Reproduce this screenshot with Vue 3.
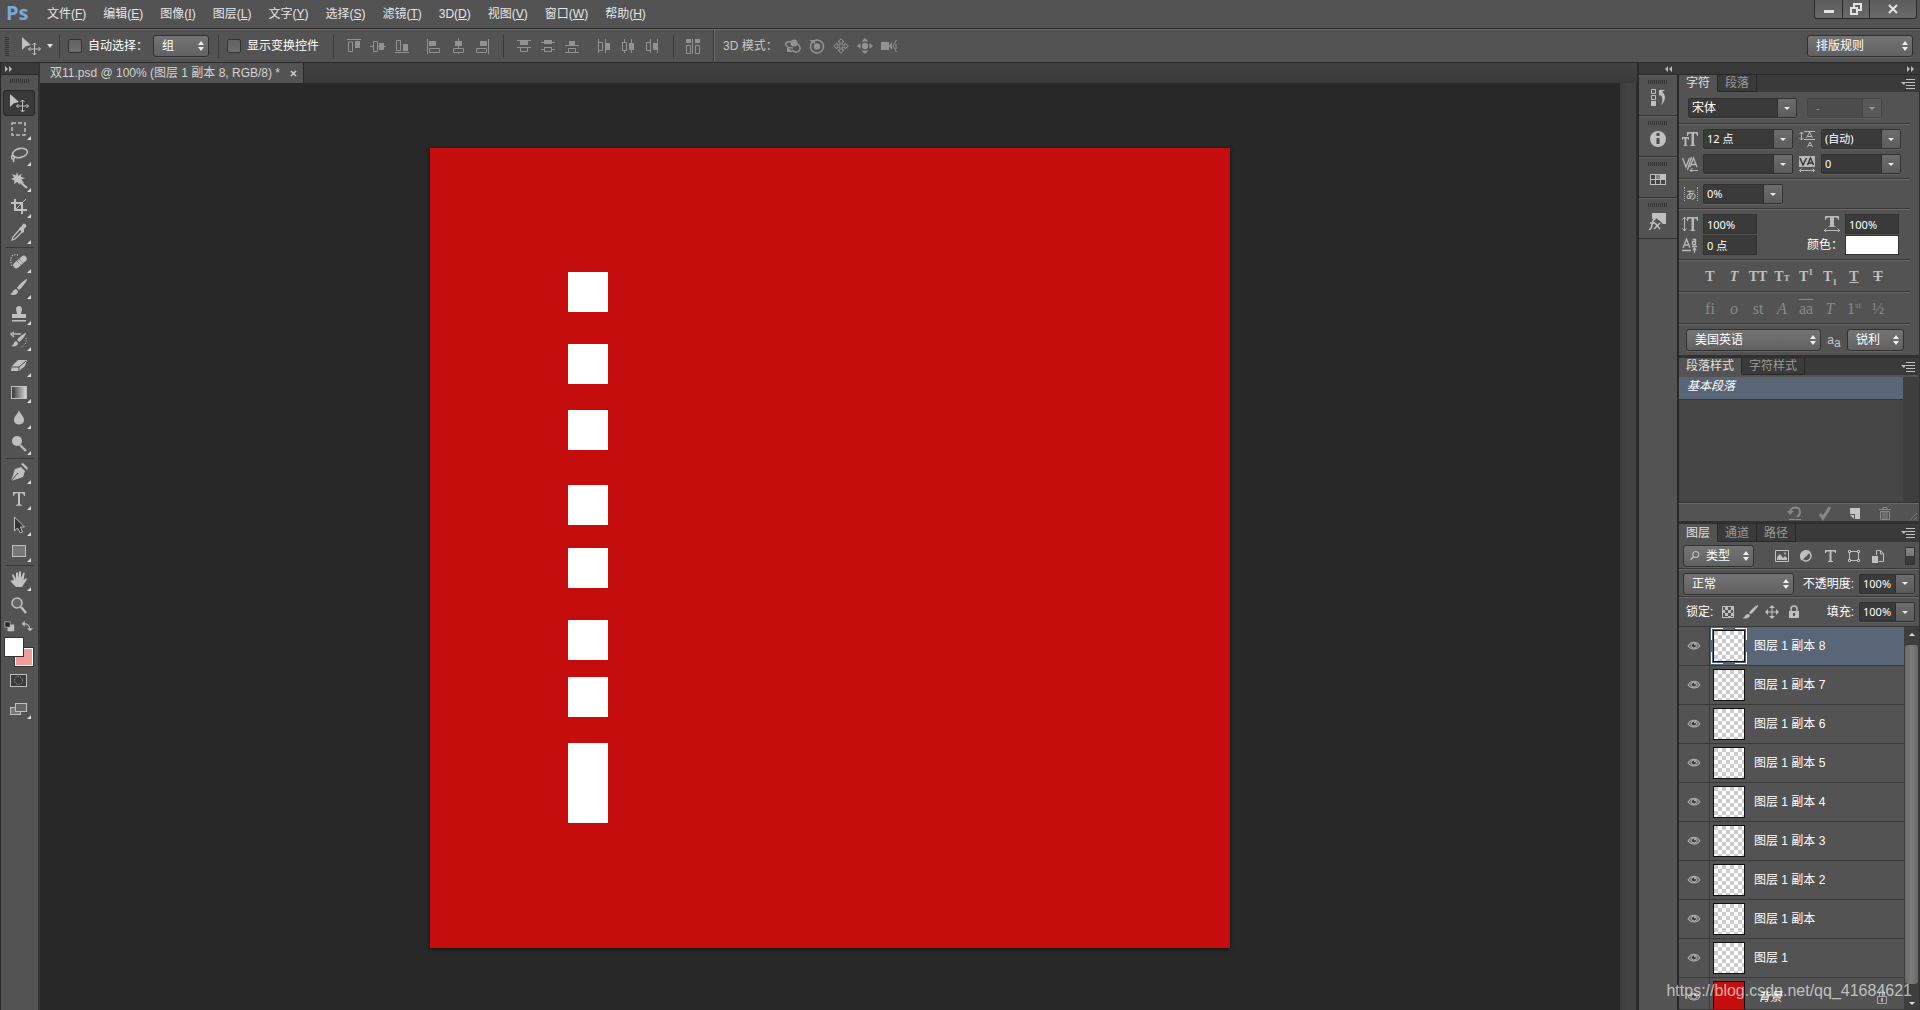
<script setup>
import { ref, reactive } from 'vue'

const menus = [
  ['文件', 'F'], ['编辑', 'E'], ['图像', 'I'], ['图层', 'L'], ['文字', 'Y'], ['选择', 'S'],
  ['滤镜', 'T'], ['3D', 'D'], ['视图', 'V'], ['窗口', 'W'], ['帮助', 'H'],
]

const icons = {
  // options bar, 16 x 16
  alignTop: '<path d="M1 1.500h14"/><path d="M2.500 4v9.500h4V4z"/><rect class="f" x="9" y="3" width="5" height="7"/>',
  alignMiddle: '<path d="M0 8.500h3M7 8.500h2M14 8.500h2"/><path d="M3.500 3.500v10h4v-10z"/><rect class="f" x="9" y="5" width="5" height="7"/>',
  alignBottom: '<path d="M1 14.500h14"/><path d="M2.500 2.500v10h4v-10z"/><rect class="f" x="9" y="6" width="5" height="7"/>',
  alignLeft: '<path d="M1.500 1v15"/><rect class="f" x="3" y="3" width="7" height="5"/><path d="M3.500 10.500h10v4h-10z"/>',
  alignCenter: '<path d="M8.500 0v3M8.500 8v2M8.500 14v2"/><rect class="f" x="5" y="3" width="7" height="5"/><path d="M3.500 10.500h10v4h-10z"/>',
  alignRight: '<path d="M14.500 1v15"/><rect class="f" x="6" y="3" width="7" height="5"/><path d="M2.500 10.500h10v4h-10z"/>',
  distTop: '<path d="M1 2.500h14M1 9.500h14"/><rect class="f" x="4" y="3" width="8" height="4"/><path d="M4.500 9.500h7v4h-7z"/>',
  distMiddle: '<path d="M1 4.500h14M1 11.500h14"/><rect class="f" x="4" y="2" width="8" height="4"/><rect x="4.500" y="9.500" width="7" height="4" fill="#535353"/>',
  distBottom: '<path d="M1 7.500h14M1 14.500h14"/><rect class="f" x="5" y="3" width="6" height="4"/><path d="M4.500 10.500h7v4h-7z"/>',
  distLeft: '<path d="M2.500 1v14M9.500 1v14"/><path d="M2.500 4.500h4v8h-4z"/><rect class="f" x="10" y="5" width="4" height="7"/>',
  distCenter: '<path d="M4.500 1v14M11.500 1v14"/><rect x="2.500" y="4.500" width="4" height="8" fill="#535353"/><rect class="f" x="9" y="5" width="5" height="7"/>',
  distRight: '<path d="M6.500 1v14M13.500 1v14"/><path d="M2.500 4.500h4v8h-4z"/><rect class="f" x="9" y="5" width="4" height="7"/>',
  autoAlign: '<path d="M7.500 1v15M1.500 7.500h4v8h-4zM10.500 7.500h4v8h-4z"/><rect class="f" x="1" y="1" width="5" height="4"/><rect class="f" x="10" y="1" width="5" height="4"/>',
  orbit: '<path stroke-width="1.500" d="M6 4C2 3 0 5 1 7s4 3 7 3M3 11l3 2"/><circle class="f" cx="9" cy="5" r="3.500"/><path class="f" d="M2 9v5h6z"/><path stroke-width="1.500" d="M12 5c3 3 4 6 2 8s-5 1-7-1"/>',
  roll: '<circle cx="8" cy="8.500" r="6.500" stroke-width="1.500"/><circle class="f" cx="8" cy="8.500" r="3.200"/><path class="f" d="M0 2h6v4z"/>',
  pan: '<path d="M8 .7l3 3.300H9v3h3V5l3.300 3-3.300 3V9H9v3h2l-3 3.300L5 12h2V9H4v2L.7 8 4 5v2h3V4H5z"/>',
  slide: '<circle class="f" cx="8" cy="8" r="3.200"/><path class="f" d="M8 0l3.500 3.500h-7zM8 16l3.500-3.500h-7zM0 8l3.500-3v6zM16 8l-3.500-3v6z"/>',
  camera: '<path class="f" d="M0 4h8v8H0zM8 8l3-4v8z"/><path d="M15.500 2L12 8l3.500 6M15 6v5"/>',
  // tools, 20 x 20
  move: '<path class="f" d="M1 1v13l3.500-3.500L10 9z"/><path d="M13.500 7v12M7.500 13h12M11.500 9l2-2 2 2M11.500 17l2 2 2-2M9.500 11l-2 2 2 2M17.500 11l2 2-2 2"/>',
  marquee: '<rect x="3" y="4" width="13" height="12" stroke-width="1.500" stroke-dasharray="4 2"/>',
  lasso: '<ellipse cx="11" cy="8" rx="7.500" ry="4.500" transform="rotate(-12 11 8)" stroke-width="1.600"/><path stroke-width="1.500" d="M4 10c-2 1-2 4 0 4s2-3 0-3M4 14c1 1 1 2 0 3"/>',
  wand: '<path class="f" d="M8 1l1.500 4 3-2.500L12 6l4 1-3.500 1.500L15 12l-4-1-.5 3-2-3-3.500 2 .5-3.500L2 8l3-1.500L3 3l4 1.500z"/><path stroke-width="2.200" d="M10 10l8 7"/>',
  crop: '<path stroke-width="2" d="M6 2v11h12M2 6h11v11"/><path d="M7 12l10-10"/>',
  eyedropper: '<path class="f" d="M10 5l2-1 2-3c2-1 4 1 3 3l-2 2v3l-2 1z"/><path stroke-width="1.300" d="M11 6l-7 8-1 3 3-1 7-7"/>',
  heal: '<path stroke-dasharray="1 1.500" stroke-width="1.500" d="M9 3C3 1 0 7 3 14"/><rect class="f" x="3" y="7" width="16" height="6" rx="3" transform="rotate(-42 11 10)"/><path stroke="#555" stroke-dasharray="1 1" d="M8 9l4 4M10 7l4 4"/>',
  brush: '<path class="f" d="M18 1c1 1-6 10-8 11l-2-2c1-2 8-9 10-9zM7 11l2 2c0 4-5 5-8 3 3 0 2-4 6-5z"/>',
  stamp: '<path class="f" d="M7 5c0-4 6-4 6 0 0 2-1 3-1 5h5v4H3v-4h5c0-2-1-3-1-5zM3 16h14v1.500H3z"/>',
  history: '<path class="f" d="M17 3c0 2-5 8-7 9l-2-2c1-2 7-7 9-7zM7 11l2 2c0 3-4 4-7 3 3 0 2-4 5-5z"/><path stroke-width="1.500" d="M4 4h8M5 2L2 4l3 3"/><path stroke-dasharray="1 1.500" d="M17 8c1 4-1 8-5 9"/>',
  eraser: '<path class="f" d="M9 4h9l-2 6-6 5H2l1-5z"/><path stroke="#4a4a4a" d="M3 11h7l7-6M10 11v4"/>',
  gradient: '<defs><linearGradient id="toolGradient"><stop stop-color="#333"/><stop offset="1" stop-color="#ddd"/></linearGradient></defs><rect x="2.500" y="4.500" width="15" height="12" fill="url(#toolGradient)"/>',
  blur: '<path class="f" d="M10 2c1 4 5 6 5 10 0 6-10 6-10 0 0-4 4-6 5-10z"/>',
  dodge: '<circle class="f" cx="8" cy="7" r="5"/><path stroke-width="2.200" d="M11 11l6 6"/>',
  pen: '<path class="f" d="M12 4l4 4-2 6-12 4 4-12z"/><path class="f" d="M12 1l6 6 1-2-5-5z"/><path stroke="#4a4a4a" d="M2 18l6-7"/><circle cx="8.500" cy="10.500" r="1" fill="#4a4a4a"/>',
  type: '<path class="f" d="M4 3h12v4h-1c-.3-2-1-2.700-2.500-2.700H11V14c0 1.500.5 1.700 2 1.800v1H7v-1c1.500-.1 2-.3 2-1.800V4.300H7.500C6 4.300 5.300 5 5 7H4z"/>',
  pathSelect: '<path d="M5.500 2v14l3-3 3 5 2-1-2-5h4z" fill="#333"/>',
  shape: '<rect x="3.500" y="4.500" width="13" height="11" fill="#777"/>',
  hand: '<path class="f" d="M5 10L3 5c0-1 1.500-1 2 0l2 4V3c0-1 1.800-1 2 0l.5 5L10 2c0-1 2-1 2 0v6l2-5c.5-1 2-.5 1.700.5L14.500 10l2-1.500c1-.5 2 .5 1 1.500L13 17H7l-5-5c-1-1 .5-2 1.500-1.500z"/>',
  zoom: '<circle cx="8" cy="7" r="5" stroke-width="1.500" fill="#666"/><path stroke-width="2.500" d="M12 11l5 6"/>',
  quickMask: '<rect x="1.500" y="4.500" width="16" height="12" fill="#3a3a3a"/><circle cx="9.500" cy="10.500" r="4" stroke-dasharray="1 1.500"/>',
  screen: '<rect x="1.500" y="9.500" width="10" height="7" fill="#777"/><rect x="6.500" y="5.500" width="11" height="8" fill="#666"/>',
  // dock, 20 x 20
  dockHistory: '<path d="M3.500 1.500h4v4h-4zM3.500 7.500h4v4h-4z"/><rect class="f" x="3" y="13" width="5" height="5"/><path class="f" d="M11 2h6L14 4c5 3 3 10-1 13 2-4 2-9-1-10l-1 1z"/>',
  info: '<circle class="f" cx="10" cy="10" r="8"/><path stroke="#4a4a4a" stroke-width="3" d="M10 9v6M10 4v3"/>',
  swatches: '<rect x="2.500" y="4.500" width="15" height="10" fill="#444"/><rect class="f" x="13" y="5" width="4" height="5"/><rect class="f" x="8" y="5" width="4" height="4" opacity=".5"/><path d="M7.500 5v9M12.500 5v9M3 9.500h14"/>',
  styles: '<path class="f" d="M4 2h14v11h-3l-3-3-4-3-4 1z"/><path stroke-width="1.500" d="M8 8c-3-1-3 3-4 6s-1 5-3 4M2 12h5M7 12l5 6M12 12l-6 6"/>',
  // character panel and layers, 16 x 16
  size: '<path class="f" d="M5 1h11v4h-1c0-2-1-2.500-3-2.500V13c0 1.500 1 1.500 1.500 1.500V15h-6v-.5C9 14.500 9.500 14 9.500 13V2.500C7 2.500 6 3 6 5H5zM0 6h7v3H6.500C6.300 8 6 7.500 4.500 7.500V13c0 1 .5 1.500 1 1.500v.5h-4v-.5c.5 0 1-.5 1-1.500V7.500C1 7.500.7 8 .5 9H0z"/>',
  leading: '<path d="M5 .5h11M5 8.500h11M2.500 1v8M.5 3l2-2 2 2M.5 7l2 2 2-2M7.500 7L10.500 1l3 6M9 5.500h3.500M8.500 16l2.500-5 2.500 5M9.500 14.500h3"/>',
  kerning: '<path stroke-width="1.300" d="M.5 2L4 11 7.500 2M9.500 1L5.500 14M8 11l3.500-9L15 11M9 8.500h5"/><path d="M8 14.500h8M10.500 12L8 14.500l2.500 2"/>',
  tracking: '<rect class="f" width="16" height="11"/><path stroke="#333" stroke-width="1.400" d="M1 2l3 7 3.500-7M8.500 9l3-7 3 7M9.500 7h4"/><path d="M0 14.500h16M2.500 12.500l-2 2 2 2M13.500 12.500l2 2-2 2"/>',
  vscale: '<path d="M2.500 1v14M.5 3.500l2-2.500 2 2.500M.5 12.500l2 2.500 2-2.500"/><path class="f" d="M5 1h11v4h-1c0-2-1-2.500-3-2.500V13c0 1.500 1 1.500 1.500 1.500V15h-6v-.5C9 14.500 9.500 14 9.500 13V2.500C7 2.500 6 3 6 5H5z"/>',
  hscale: '<path class="f" d="M1 0h14v4h-1c0-2-1-2.500-4-2.500V9c0 1 .5 1.500 2 1.500V11H4v-.5C5.500 10.500 6 10 6 9V1.500C3 1.500 2 2 2 4H1z"/><path d="M0 14.500h16M2.500 12.500l-2 2 2 2M13.500 12.500l2 2-2 2"/>',
  baseline: '<path stroke-width="1.300" d="M1 11L4.500 2 8 11M2.500 8h4M0 13.500h9M10.500 2.500h3v5h-3v-3h3M10 9.500h5M12.500 16v-5M11 13l1.500-2 1.500 2"/>',
  history2: '<path stroke-width="2" d="M3 7c1-6 10-6 10 0 0 2-1 4-3 5"/><path class="f" d="M0 6h7l-4 4zM2 14h12v1H2z"/>',
  check: '<path stroke-width="3" d="M3 9l3 4 7-11"/>',
  newItem: '<path class="f" d="M3 3h10v11H8V9H3z"/><path class="f" d="M3 10h4v4z"/>',
  trash: '<path d="M3.500 6.500h9v8h-9zM6 7v7M8 7v7M10 7v7M2 4.500h12M6 4V2.500h4V4"/>',
  image: '<path d="M1.500 2.500h13v11h-13z"/><path class="f" d="M3 12V9l3-3 3 4 2-2 2 2v2z"/><circle class="f" cx="11" cy="5.500" r="1"/>',
  adjust: '<circle cx="8" cy="8" r="5" stroke-width="1.500"/><path class="f" d="M12 3.500A6 6 0 013 12z" transform="rotate(180 7.800 8)"/>',
  text: '<path class="f" d="M3 2h11v3h-1c-.3-1-.5-1.500-2-1.500H9.500V12c0 1 .5 1 1.500 1v1H6v-1c1 0 1.500 0 1.500-1V3.500H6C4.500 3.500 4.300 4 4 5H3z"/>',
  vector: '<path d="M4 3.500h8M3.500 5v6M12.500 5v6M4 12.500h8M2.500 2.500h2v2h-2zM11.500 2.500h2v2h-2zM2.500 11.500h2v2h-2zM11.500 11.500h2v2h-2z"/>',
  smart: '<path d="M6.500 7V2.500h4l3 3v8h-5M10.500 3v3h3"/><rect class="f" x="2" y="8" width="6" height="7"/>',
  checker: '<rect x="2.500" y="2.500" width="11" height="11"/><path class="f" d="M5 3h3v3H5zM11 3h2v3h-2zM8 6h3v3H8zM3 6h2v3H3zM5 9h3v3H5zM11 9h2v3h-2zM8 12h3v2H8z"/>',
  brushSmall: '<path class="f" d="M16 1c1 1-5 8-7 9L7 9c1-2 7-8 9-8zM6 10l2 1c0 3-4 4-8 3 3 0 3-4 6-4z"/>',
  moveSmall: '<path d="M8 3v10M3 8h10"/><path class="f" d="M8 1l3 3H5zM8 15l3-3H5zM1 8l3-3v6zM15 8l-3-3v6z"/>',
  lock: '<path stroke-width="1.500" d="M5 7V5c0-4 6-4 6 0v2"/><path class="f" fill-rule="evenodd" d="M3 7h10v7H3zM7 9h2v3H7z"/>',
  lockSmall: '<path d="M5.500 7V4c0-3 5-3 5 0v3M3.500 7.500h9v7h-9z"/><path class="f" d="M7 9h2v4H7z"/>',
  eye: '<path d="M2 8c2-5 10-5 12 0-2 4-10 4-12 0z" fill="#777"/><circle cx="8" cy="7.500" r="2.500" fill="#333"/><circle class="f" cx="9" cy="6.500" r="1"/>',
  search: '<circle cx="9" cy="6" r="4" stroke-width="1.500"/><path stroke-width="2" d="M6 9l-4 4"/>',
  defaults: '<rect class="f" x="6" y="6" width="9" height="9"/><rect x="2.500" y="2.500" width="7" height="7" fill="#222"/>',
  swap: '<path stroke-width="1.500" d="M4 5c5 0 7 2 8 7"/><path class="f" d="M1 5l4-4v8zM8 11h8l-4 4z"/>',
}

const alignGroups = [
  ['alignTop', 'alignMiddle', 'alignBottom'],
  ['alignLeft', 'alignCenter', 'alignRight'],
]
const distGroups = [
  ['distTop', 'distMiddle', 'distBottom'],
  ['distLeft', 'distCenter', 'distRight'],
]
const modes3d = ['orbit', 'roll', 'pan', 'slide', 'camera']

const toolGroups = [
  ['move', 'marquee', 'lasso', 'wand', 'crop', 'eyedropper'],
  ['heal', 'brush', 'stamp', 'history', 'eraser', 'gradient', 'blur', 'dodge'],
  ['pen', 'type', 'pathSelect', 'shape'],
  ['hand', 'zoom'],
]
const noFlyout = ['move', 'zoom']
const activeTool = ref('move')

const blocks = [
  { top: 124, height: 40 }, { top: 196, height: 40 }, { top: 262, height: 40 }, { top: 337, height: 40 },
  { top: 400, height: 40 }, { top: 472, height: 40 }, { top: 529, height: 40 }, { top: 595, height: 80 },
]

const dock = ['dockHistory', 'info', 'swatches', 'styles']

const character = reactive({
  font: '宋体', size: '12 点', leading: '(自动)', kerning: '', tracking: '0',
  tsume: '0%', vscale: '100%', hscale: '100%', baseline: '0 点',
})

const layers = [
  '图层 1 副本 8', '图层 1 副本 7', '图层 1 副本 6', '图层 1 副本 5', '图层 1 副本 4',
  '图层 1 副本 3', '图层 1 副本 2', '图层 1 副本', '图层 1',
]
const selectedLayer = ref(0)
const opacity = ref('100%')
const fill = ref('100%')
</script>

<template>
  <div class="app">
    <header class="menubar">
      <span class="logo">Ps</span>
      <nav class="menus">
        <button v-for="[label, key] in menus" :key="key">{{ label }}(<u>{{ key }}</u>)</button>
      </nav>
      <div class="window-controls">
        <button aria-label="最小化"><svg width="12" height="12"><rect x="1" y="7" width="10" height="3" fill="#e4e4e4" /></svg></button>
        <button aria-label="还原"><svg width="12" height="12" fill="none" stroke="#e4e4e4" stroke-width="2"><path d="M4 4V1h7v6H8M1 5h6v6H1z" /></svg></button>
        <button class="close" aria-label="关闭"><svg width="12" height="12" stroke="#e4e4e4" stroke-width="2"><path d="M2 2l8 8M10 2l-8 8" /></svg></button>
      </div>
    </header>

    <section class="options">
      <i class="grip-v"></i>
      <button class="current-tool" aria-label="移动工具">
        <svg class="icon tool-icon" viewBox="0 0 20 20" v-html="icons.move"></svg><i class="tri"></i>
      </button>
      <i class="rule"></i>
      <label class="check"><input type="checkbox">自动选择：</label>
      <span class="pick auto"><select aria-label="自动选择"><option>组</option></select></span>
      <i class="rule"></i>
      <label class="check"><input type="checkbox">显示变换控件</label>
      <i class="rule"></i>
      <div class="icon-groups">
        <div v-for="(g, i) in alignGroups" :key="i" class="icon-group">
          <button v-for="n in g" :key="n" :aria-label="n"><svg class="icon" viewBox="0 0 16 16" v-html="icons[n]"></svg></button>
        </div>
      </div>
      <i class="rule"></i>
      <div class="icon-groups">
        <div v-for="(g, i) in distGroups" :key="i" class="icon-group">
          <button v-for="n in g" :key="n" :aria-label="n"><svg class="icon" viewBox="0 0 16 16" v-html="icons[n]"></svg></button>
        </div>
      </div>
      <i class="rule"></i>
      <div class="icon-group"><button aria-label="自动对齐图层"><svg class="icon" viewBox="0 0 16 16" v-html="icons.autoAlign"></svg></button></div>
      <i class="rule tall"></i>
      <span class="mode-label">3D 模式：</span>
      <div class="icon-group modes">
        <button v-for="n in modes3d" :key="n" :aria-label="n"><svg class="icon" viewBox="0 0 16 16" v-html="icons[n]"></svg></button>
      </div>
      <span class="pick workspace"><select aria-label="工作区"><option>排版规则</option></select></span>
    </section>

    <main class="workspace-area">
      <aside class="toolbar">
        <div class="collapse left"><svg width="10" height="8"><path d="M0 1l3 3-3 3zM4 1l3 3-3 3z" fill="#bbb" /></svg></div>
        <i class="grip-h"></i>
        <div v-for="(g, i) in toolGroups" :key="i" class="tool-group">
          <button v-for="n in g" :key="n" class="tool" :class="{ active: n === activeTool }" :aria-label="n" @click="activeTool = n">
            <svg class="icon tool-icon" viewBox="0 0 20 20" v-html="icons[n]"></svg>
            <i v-if="!noFlyout.includes(n)" class="corner"></i>
          </button>
        </div>
        <div class="swatch-actions">
          <button aria-label="默认颜色"><svg class="icon small" viewBox="0 0 16 16" v-html="icons.defaults"></svg></button>
          <button aria-label="切换颜色"><svg class="icon small" viewBox="0 0 16 16" v-html="icons.swap"></svg></button>
        </div>
        <div class="swatches"><i class="back"></i><i class="front"></i></div>
        <button class="tool" aria-label="快速蒙版"><svg class="icon tool-icon" viewBox="0 0 20 20" v-html="icons.quickMask"></svg></button>
        <button class="tool" aria-label="屏幕模式"><svg class="icon tool-icon" viewBox="0 0 20 20" v-html="icons.screen"></svg><i class="corner"></i></button>
      </aside>

      <section class="document">
        <div class="doc-tabs">
          <div class="doc-tab">双11.psd @ 100% (图层 1 副本 8, RGB/8) *
            <button aria-label="关闭文档"><svg width="7" height="7" stroke="#ccc" stroke-width="1.500"><path d="M1 1l5 5M6 1L1 6" /></svg></button>
          </div>
        </div>
        <div class="doc-body">
          <div class="stage">
            <div class="artboard">
              <i v-for="b in blocks" :key="b.top" class="block" :style="{ top: b.top + 'px', height: b.height + 'px' }"></i>
            </div>
          </div>
          <div class="doc-scroll"></div>
        </div>
      </section>

      <aside class="docks">
        <div class="collapse right">
          <svg width="10" height="8"><path d="M4 1L1 4l3 3zM8 1L5 4l3 3z" fill="#bbb" /></svg>
          <svg width="10" height="8"><path d="M1 1l3 3-3 3zM5 1l3 3-3 3z" fill="#bbb" /></svg>
        </div>
        <div class="dock-columns">
          <div class="dock-icons">
            <div v-for="n in dock" :key="n" class="dock-cell">
              <i class="grip-h"></i>
              <button :aria-label="n"><svg class="icon tool-icon" viewBox="0 0 20 20" v-html="icons[n]"></svg></button>
            </div>
          </div>

          <div class="panels">
            <section class="panel">
              <div class="tabs">
                <button class="on">字符</button><button>段落</button>
                <svg class="panel-menu" width="14" height="10"><path d="M0 3h5l-2 3zM5 0h9v1H5zM5 3h9v1H5zM5 6h9v1H5zM5 9h9v1H5z" fill="#c0c0c0" /></svg>
              </div>
              <div class="char">
                <div class="row first">
                  <span class="combo font"><input v-model="character.font" aria-label="字体"><button aria-label="选择字体"></button></span>
                  <span class="combo style off"><input value="-" disabled aria-label="字体样式"><button disabled aria-label="选择样式"></button></span>
                </div>
                <div class="block-rows">
                  <div class="row">
                    <svg class="icon glyph" viewBox="0 0 16 16" v-html="icons.size"></svg>
                    <span class="combo w90"><input v-model="character.size" aria-label="字号"><button aria-label="选择字号"></button></span>
                    <svg class="icon glyph second" viewBox="0 0 16 16" v-html="icons.leading"></svg>
                    <span class="combo w80"><input v-model="character.leading" aria-label="行距"><button aria-label="选择行距"></button></span>
                  </div>
                  <div class="row">
                    <svg class="icon glyph" viewBox="0 0 16 16" v-html="icons.kerning"></svg>
                    <span class="combo w90"><input v-model="character.kerning" aria-label="字偶间距"><button aria-label="选择字偶间距"></button></span>
                    <svg class="icon glyph second" viewBox="0 0 16 16" v-html="icons.tracking"></svg>
                    <span class="combo w80"><input v-model="character.tracking" aria-label="字距"><button aria-label="选择字距"></button></span>
                  </div>
                </div>
                <div class="row tsume">
                  <span class="kana">あ</span>
                  <span class="combo w80"><input v-model="character.tsume" aria-label="比例间距"><button aria-label="选择比例间距"></button></span>
                </div>
                <div class="scale-rows">
                  <div class="row">
                    <svg class="icon glyph" viewBox="0 0 16 16" v-html="icons.vscale"></svg>
                    <input v-model="character.vscale" class="field" aria-label="垂直缩放">
                    <svg class="icon glyph end" viewBox="0 0 16 16" v-html="icons.hscale"></svg>
                    <input v-model="character.hscale" class="field" aria-label="水平缩放">
                  </div>
                  <div class="row">
                    <svg class="icon glyph" viewBox="0 0 16 16" v-html="icons.baseline"></svg>
                    <input v-model="character.baseline" class="field" aria-label="基线偏移">
                    <span class="color-label">颜色：</span>
                    <button class="color" aria-label="文本颜色"></button>
                  </div>
                </div>
                <div class="type-styles">
                  <button>T</button><button><em>T</em></button><button>TT</button>
                  <button>T<small>T</small></button><button>T<sup>1</sup></button><button>T<sub>1</sub></button>
                  <button><u>T</u></button><button><s>T</s></button>
                </div>
                <div class="type-styles ot">
                  <button>fi</button><button><em>o</em></button><button>st</button><button><em>A</em></button>
                  <button class="over">aa</button><button><em>T</em></button><button>1<sup>st</sup></button><button>½</button>
                </div>
                <div class="row lang">
                  <span class="pick language"><select aria-label="语言"><option>美国英语</option></select></span>
                  <span class="aa">a<sub>a</sub></span>
                  <span class="pick aliasing"><select aria-label="消除锯齿"><option>锐利</option></select></span>
                </div>
              </div>
            </section>

            <section class="panel">
              <div class="tabs">
                <button class="on">段落样式</button><button>字符样式</button>
                <svg class="panel-menu" width="14" height="10"><path d="M0 3h5l-2 3zM5 0h9v1H5zM5 3h9v1H5zM5 6h9v1H5zM5 9h9v1H5z" fill="#c0c0c0" /></svg>
              </div>
              <div class="style-list"><ul><li>基本段落</li></ul></div>
              <div class="style-foot">
                <button class="dim" aria-label="清除覆盖"><svg class="icon" viewBox="0 0 16 16" v-html="icons.history2"></svg></button>
                <button class="dim" aria-label="重新定义"><svg class="icon" viewBox="0 0 16 16" v-html="icons.check"></svg></button>
                <button aria-label="新建样式"><svg class="icon" viewBox="0 0 16 16" v-html="icons.newItem"></svg></button>
                <button class="dim" aria-label="删除样式"><svg class="icon" viewBox="0 0 16 16" v-html="icons.trash"></svg></button>
                <i class="resize"></i>
              </div>
            </section>

            <section class="panel layers">
              <div class="tabs">
                <button class="on">图层</button><button>通道</button><button>路径</button>
                <svg class="panel-menu" width="14" height="10"><path d="M0 3h5l-2 3zM5 0h9v1H5zM5 3h9v1H5zM5 6h9v1H5zM5 9h9v1H5z" fill="#c0c0c0" /></svg>
              </div>
              <div class="layer-bar">
                <span class="pick kind"><svg class="icon small" viewBox="0 0 16 16" v-html="icons.search"></svg><select aria-label="过滤类型"><option>类型</option></select></span>
                <div class="icon-group filters">
                  <button v-for="n in ['image', 'adjust', 'text', 'vector', 'smart']" :key="n" :aria-label="n"><svg class="icon" viewBox="0 0 16 16" v-html="icons[n]"></svg></button>
                </div>
                <button class="toggle" aria-label="过滤开关"></button>
              </div>
              <div class="layer-bar">
                <span class="pick blend"><select aria-label="混合模式"><option>正常</option></select></span>
                <label class="amount">不透明度:<span class="combo w56"><input v-model="opacity"><button aria-label="调整不透明度"></button></span></label>
              </div>
              <div class="layer-bar lock-bar">
                <span class="lock-label">锁定:</span>
                <div class="icon-group locks">
                  <button v-for="n in ['checker', 'brushSmall', 'moveSmall', 'lock']" :key="n" :aria-label="n"><svg class="icon" viewBox="0 0 16 16" v-html="icons[n]"></svg></button>
                </div>
                <label class="amount">填充:<span class="combo w56"><input v-model="fill"><button aria-label="调整填充"></button></span></label>
              </div>
              <div class="layer-area">
                <ul class="layer-list">
                  <li v-for="(name, i) in layers" :key="name" :class="{ selected: i === selectedLayer }" @click="selectedLayer = i">
                    <button class="eye" aria-label="可见性"><svg class="icon" viewBox="0 0 16 16" v-html="icons.eye"></svg></button>
                    <span class="thumb-frame"><i class="thumb"></i></span>
                    <span>{{ name }}</span>
                  </li>
                  <li>
                    <button class="eye" aria-label="可见性"><svg class="icon" viewBox="0 0 16 16" v-html="icons.eye"></svg></button>
                    <span class="thumb-frame"><i class="thumb red"></i></span>
                    <em class="bg-name">背景</em>
                    <svg class="icon bg-lock" viewBox="0 0 16 16" v-html="icons.lockSmall"></svg>
                  </li>
                </ul>
                <div class="layer-scroll"><i class="up"></i><i class="bar"></i><i class="down"></i></div>
              </div>
            </section>
          </div>
        </div>
      </aside>
    </main>
    <div class="watermark">https://blog.csdn.net/qq_41684621</div>
  </div>
</template>

<style>
body { background: #282828; }
.icon .f { fill: currentColor; stroke: none; }
</style>

<style scoped>
* { box-sizing: border-box; }
.app {
  position: relative;
  display: flex;
  flex-direction: column;
  height: 100vh;
  overflow: hidden;
  background: #535353;
  color: #f2f2f2;
  font: 12px/16px "Liberation Sans", "Noto Sans CJK SC", sans-serif;
}
button, input, select { font: inherit; color: inherit; margin: 0; padding: 0; border: 0; background: none; border-radius: 0; }
button { display: flex; align-items: center; justify-content: center; }
ul { list-style: none; margin: 0; padding: 0; }
i { display: block; flex: none; }
.icon { display: block; flex: none; width: 16px; height: 16px; fill: none; stroke: currentColor; }
.tool-icon { width: 20px; height: 20px; color: #c0c0c0; }
.small { width: 12px; height: 12px; color: #c0c0c0; }

.menubar { display: flex; flex: none; height: 29px; border-bottom: 1px solid #282828; }
.logo { width: 39px; padding-left: 6px; font: bold 20px/26px "Open Sans", sans-serif; color: #7ba7d9; }
.menus { display: flex; flex: 1; }
.menus button { display: block; padding: 0 9px 0 8px; line-height: 26px; color: #e6e6e6; white-space: nowrap; }
.window-controls { display: flex; height: 19px; margin-right: 3px; border: 1px solid #2a2a2a; border-top: 0; border-radius: 0 0 3px 3px; background: linear-gradient(#5c5c5c, #6a6a6a); }
.window-controls button { width: 27px; }
.window-controls button + button { border-left: 1px solid #2a2a2a; }
.window-controls .close { width: 47px; }

.options { display: flex; align-items: center; flex: none; height: 34px; border-top: 1px solid #6a6a6a; border-bottom: 1px solid #282828; padding: 0 7px 0 5px; }
.grip-v { width: 4px; height: 19px; background: repeating-linear-gradient(#333 0 1px, transparent 1px 2px); }
.current-tool { gap: 6px; margin: 0 6px 0 12px; }
.tri { border: 3px solid transparent; border-top: 4px solid #e0e0e0; border-bottom: 0; }
.rule { width: 1px; height: 23px; background: #383838; }
.rule.tall { width: 2px; height: 32px; margin-left: 12px; border-left: 1px solid #383838; background: #6a6a6a; }
.check { display: flex; align-items: center; gap: 6px; margin-left: 8px; color: #fff; white-space: nowrap; }
.check input { appearance: none; width: 14px; height: 14px; border: 1px solid #333; border-radius: 2px; background: linear-gradient(#626262, #6e6e6e); }
.rule + .check + .rule { margin-left: 14px; }
.pick { position: relative; display: flex; flex: none; height: 22px; color: #fff; }
.pick select { appearance: none; width: 100%; height: 100%; padding: 0 8px; border: 1px solid #303030; border-radius: 3px; background: linear-gradient(#747474, #616161); box-shadow: 0 1px #626262; }
.pick::before, .pick::after { content: ""; position: absolute; right: 5px; top: 6px; border: 3px solid transparent; pointer-events: none; }
.pick::before { border-top: 0; border-bottom: 4px solid #eee; }
.pick::after { top: 12px; border-bottom: 0; border-top: 4px solid #eee; }
.auto { width: 56px; margin: 0 9px 0 5px; }
.icon-groups { display: flex; gap: 16px; margin: 0 13px 0 12px; }
.icon-group { display: flex; gap: 8px; color: #929292; }
.rule + .icon-group { margin-left: 11px; }
.mode-label { margin: 0 7px 0 8px; color: #c8c8c8; white-space: nowrap; }
.workspace { width: 106px; margin-left: auto; }

.workspace-area { display: flex; flex: 1; min-height: 0; }
.collapse { display: flex; align-items: center; height: 12px; flex: none; background: #393939; border-bottom: 1px solid #282828; }
.toolbar { display: flex; flex-direction: column; align-items: stretch; flex: none; width: 40px; border-left: 1px solid #282828; border-right: 2px solid #333; }
.collapse.left { padding-left: 4px; }
.grip-h { width: 20px; height: 4px; margin: 4px auto; background: repeating-linear-gradient(90deg, #333 0 1px, transparent 1px 2px); }
.toolbar > .grip-h { margin: 4px 0 7px 9px; }
.tool { position: relative; width: 32px; height: 26px; margin-left: 2px; border: 1px solid transparent; border-radius: 3px; }
.tool.active { background: #3a3a3a; border-color: #282828; }
.corner { position: absolute; right: 3px; bottom: 1px; border: 2px solid #ddd; border-top-color: transparent; border-left-color: transparent; }
.tool-group + .tool-group::before { content: ""; display: block; height: 1px; margin: 1px 4px; background: #383838; }
.swatch-actions { display: flex; gap: 6px; padding: 1px 0 5px 2px; }
.swatches { position: relative; height: 30px; margin: 0 4px 0 3px; }
.front, .back { position: absolute; width: 20px; height: 20px; border: 1px solid #333; background: #fff; }
.back { right: 0; bottom: 0; background: #f29b9b; box-shadow: inset 0 0 0 1px #fff; }
.swatches + .tool { margin-bottom: 2px; }

.document { display: flex; flex-direction: column; flex: 1; min-width: 0; }
.doc-tabs { display: flex; height: 20px; flex: none; background: linear-gradient(#424242, #3a3a3a); }
.doc-tab { display: flex; align-items: center; gap: 10px; padding: 0 6px 0 10px; border-right: 1px solid #282828; background: #535353; color: #d4d4d4; white-space: nowrap; }
.doc-body { display: flex; flex: 1; min-height: 0; background: #282828; }
.stage { display: flex; align-items: center; justify-content: center; flex: 1; padding-top: 3px; }
.artboard { position: relative; flex: none; width: 800px; height: 800px; background: #c50d0d; box-shadow: 0 1px 4px #111; }
.block { position: absolute; left: 138px; width: 40px; background: #fff; }
.doc-scroll { width: 17px; background: linear-gradient(90deg, #3c3c3c, #454545 60%, #404040); border-right: 1px solid #303030; }

.docks { display: flex; flex-direction: column; flex: none; width: 283px; border-left: 2px solid #282828; }
.collapse.right { justify-content: space-between; padding: 0 4px 0 25px; }
.dock-columns { display: flex; flex: 1; min-height: 0; }
.dock-icons { width: 40px; flex: none; border-right: 2px solid #282828; }
.dock-cell { height: 41px; border-top: 1px solid #626262; border-bottom: 1px solid #303030; }
.dock-cell button { width: 100%; }
.panels { display: flex; flex-direction: column; flex: 1; min-width: 0; border-right: 1px solid #333; }
.panel { flex: none; border-bottom: 3px solid #303030; }
.tabs { display: flex; height: 17px; background: #3a3a3a; }
.tabs button { padding: 0 7px; border-right: 1px solid #282828; border-bottom: 1px solid #282828; color: #9a9a9a; }
.tabs .on { background: #535353; border-bottom-color: #535353; color: #e0e0e0; }
.panel-menu { margin: 4px 4px 0 auto; }

.row { display: flex; align-items: center; }
.char > * { margin-right: 9px; border-bottom: 1px solid #6a6a6a; box-shadow: 0 -1px #383838 inset; }
.combo { display: flex; flex: none; height: 20px; border: 1px solid #303030; border-radius: 2px; background: #3a3a3a; color: #fff; box-shadow: 0 1px #626262; }
.combo input { flex: 1; min-width: 0; width: 0; padding-left: 3px; }
.combo input, .field { font-family: "Noto Sans", "Noto Sans CJK SC", sans-serif; font-size: 11px; }
.combo button { width: 19px; border-left: 1px solid #303030; background: linear-gradient(#6c6c6c, #5c5c5c); }
.combo button::before { content: ""; border: 3px solid transparent; border-top: 3px solid #eee; border-bottom: 0; }
.row.first { padding: 6px 0 6px 9px; gap: 10px; }
.font { width: 109px; }
.combo.font input { font-size: 12px; }
.style { width: 75px; }
.combo.off { background: #4c4c4c; color: #999; border-color: #444; }
.off input { padding-left: 8px; }
.off button { background: #585858; border-color: #444; }
.off button::before { border-top-color: #999; }
.w90 { width: 90px; }
.w80 { width: 80px; }
.w56 { width: 56px; }
.glyph { margin: 0 5px 0 3px; color: #b8b8b8; }
.glyph.second { margin: 0 6px; }
.glyph.end { margin: 0 5px 0 auto; }
.kana { width: 14px; margin: 0 5px; border: 1px dotted #aaa; border-width: 0 1px; font: 11px/14px "Noto Sans CJK JP", sans-serif; color: #c4c4c4; text-align: center; }
.block-rows { display: flex; flex-direction: column; gap: 5px; padding: 4px 0 5px; }
.tsume { padding: 4px 0 5px; }
.scale-rows { padding: 4px 0 5px; display: flex; flex-direction: column; gap: 1px; }
.field { width: 54px; height: 20px; padding-left: 3px; border: 1px solid #333; background: #3a3a3a; color: #fff; }
.color-label { margin: 0 2px 0 auto; color: #fff; }
.color { width: 54px; height: 20px; border: 1px solid #333; background: #fff; }
.scale-rows .row { padding-right: 11px; }
.type-styles { display: flex; height: 32px; padding-left: 19px; font-family: "Liberation Serif", serif; }
.type-styles button { display: block; width: 24px; font-size: 14px; font-weight: bold; line-height: 28px; color: #c0c0c0; text-align: center; white-space: nowrap; }
.type-styles small, .type-styles sup, .type-styles sub { font-size: 9px; line-height: 8px; }
.type-styles.ot button { font-size: 16px; font-weight: normal; color: #8a8a8a; }
.type-styles .over { text-decoration: overline; }
.char > .row.lang { height: 30px; padding: 4px 0 4px 7px; border: 0; box-shadow: none; margin: 0; }
.language { width: 135px; }
.aa { width: 26px; text-align: center; color: #c4c4c4; line-height: 14px; }
.aa sub { font-size: 12px; line-height: 8px; }
.aliasing { width: 57px; }

.style-list { height: 126px; margin-top: 2px; padding-right: 16px; background: linear-gradient(#454545, #454545) left / calc(100% - 16px) 100% no-repeat, #3e3e3e; border-bottom: 1px solid #303030; }
.style-list li { height: 23px; padding: 1px 8px; background: #596678; border-bottom: 1px solid #383838; color: #fff; font-style: italic; }
.style-foot { display: flex; align-items: center; justify-content: flex-end; gap: 14px; height: 18px; padding-right: 2px; border-top: 1px solid #6a6a6a; color: #c4c4c4; }
.style-foot .dim { color: #888; }
.resize { width: 10px; height: 10px; margin-top: 6px; background: repeating-linear-gradient(135deg, transparent 0 2px, #777 2px 3px); clip-path: polygon(100% 0, 100% 100%, 0 100%); }

.layers { display: flex; flex-direction: column; flex: 1; min-height: 0; border: 0; }
.layers .tabs { height: 18px; flex: none; }
.layer-bar { display: flex; align-items: center; flex: none; height: 28px; padding: 0 4px; border-bottom: 1px solid #6a6a6a; box-shadow: 0 -1px #383838 inset; }
.kind { width: 71px; }
.kind .icon { position: absolute; left: 6px; top: 5px; }
.kind select { padding-left: 22px; }
.filters, .locks { color: #c0c0c0; }
.filters { margin-left: 20px; }
.toggle { width: 10px; height: 18px; margin-left: auto; border: 1px solid #333; background: linear-gradient(#888, #777 50%, #3a3a3a 50%); }
.blend { width: 111px; }
.amount { display: flex; align-items: center; gap: 5px; margin-left: auto; color: #fff; white-space: nowrap; }
.lock-bar { height: 29px; border-bottom: 1px solid #383838; box-shadow: none; }
.lock-label { margin: 0 7px 0 3px; color: #fff; }
.icon-group.locks { gap: 6px; }
.layer-area { display: flex; flex: 1; min-height: 0; border-bottom: 1px solid #383838; }
.layer-list { flex: 1; overflow: hidden; }
.layer-list li { display: flex; align-items: center; height: 39px; border-bottom: 1px solid #383838; color: #fff; white-space: nowrap; }
.eye { align-self: stretch; width: 31px; border-right: 1px solid #383838; background: #535353; color: #b4b4b4; flex: none; }
.selected { background: #596678; }
.thumb-frame { position: relative; display: flex; flex: none; margin: 0 7px 0 1px; padding: 2px; }
.thumb { width: 32px; height: 32px; border: 1px solid #111; background: repeating-conic-gradient(#fff 0 25%, #ccc 0 50%) 0 0 / 8px 8px; }
.thumb.red { background: #c50d0d; }
.selected .thumb-frame { background: linear-gradient(#fff, #fff) 0 0 / 12px 1px, linear-gradient(#fff, #fff) 0 0 / 1px 12px, linear-gradient(#fff, #fff) 100% 0 / 12px 1px, linear-gradient(#fff, #fff) 100% 0 / 1px 12px, linear-gradient(#fff, #fff) 0 100% / 12px 1px, linear-gradient(#fff, #fff) 0 100% / 1px 12px, linear-gradient(#fff, #fff) 100% 100% / 12px 1px, linear-gradient(#fff, #fff) 100% 100% / 1px 12px; background-repeat: no-repeat; }
.bg-name { margin-left: 4px; }
.bg-lock { margin: 0 14px 0 auto; color: #aaa; }
.layer-scroll { display: flex; flex-direction: column; align-items: center; width: 15px; padding: 6px 0 4px; background: #3e3e3e; }
.layer-scroll .up { border: 3px solid transparent; border-top: 0; border-bottom: 3px solid #ddd; }
.layer-scroll .down { border: 3px solid transparent; border-bottom: 0; border-top: 3px solid #ddd; }
.layer-scroll .bar { flex: 1; width: 13px; margin: 9px 0 18px; border-radius: 3px; background: linear-gradient(90deg, #686868, #7c7c7c, #686868); }

.watermark { position: absolute; right: 8px; bottom: 8px; font-size: 16px; line-height: 22px; color: rgba(255, 255, 255, .65); pointer-events: none; }
</style>
